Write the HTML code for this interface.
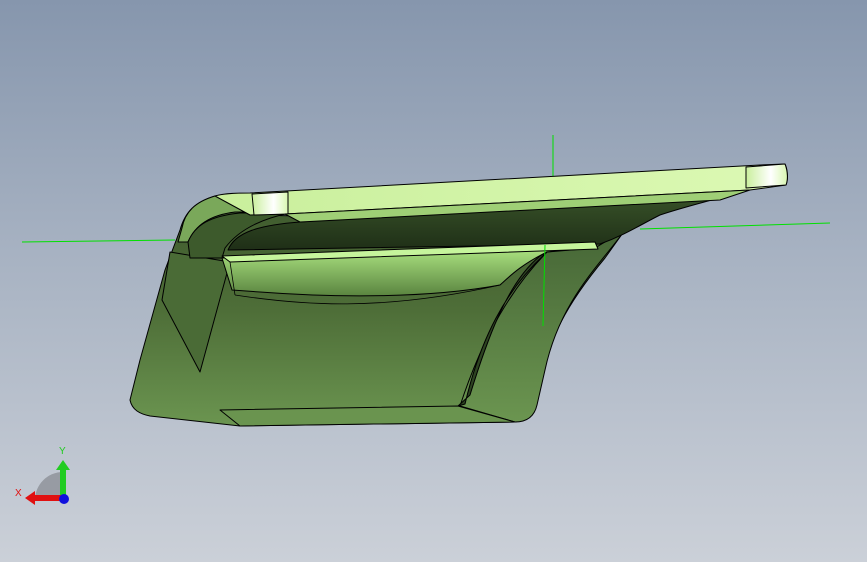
<!DOCTYPE html>
<html><head><meta charset="utf-8"><style>
html,body{margin:0;padding:0;width:867px;height:562px;overflow:hidden}
body{background:linear-gradient(#8696ad 0%,#a7b2c2 45%,#cbd0d8 100%)}
svg{position:absolute;left:0;top:0}
</style></head><body>
<svg width="867" height="562" viewBox="0 0 867 562">
<defs>
<linearGradient id="body" x1="0" y1="0" x2="0" y2="1">
<stop offset="0" stop-color="#3f5a2e"/><stop offset="0.5" stop-color="#4e6e38"/><stop offset="1" stop-color="#6b9550"/></linearGradient>
<linearGradient id="plate" x1="0" y1="0" x2="1" y2="0">
<stop offset="0" stop-color="#c9ef9c"/><stop offset="1" stop-color="#dcf9b4"/></linearGradient>
<linearGradient id="under" x1="0" y1="0" x2="0" y2="1">
<stop offset="0" stop-color="#3a552a"/><stop offset="1" stop-color="#1f2f17"/></linearGradient>
<linearGradient id="strip" x1="0" y1="0" x2="0" y2="1">
<stop offset="0" stop-color="#b0e884"/><stop offset="1" stop-color="#5a8440"/></linearGradient>
<linearGradient id="right" x1="0" y1="0" x2="0" y2="1">
<stop offset="0" stop-color="#466636"/><stop offset="1" stop-color="#6b9550"/></linearGradient>
<linearGradient id="hl" x1="0" y1="0" x2="1" y2="0">
<stop offset="0" stop-color="#c9ef9c"/><stop offset="0.6" stop-color="#ffffff"/><stop offset="1" stop-color="#d8f6b0"/></linearGradient>
</defs>
<g stroke="#00e000" stroke-width="1">
<line x1="22" y1="242" x2="175" y2="240"/>
<line x1="640" y1="229" x2="830" y2="223"/>
<line x1="553" y1="135" x2="553" y2="176"/>
</g>
<g stroke="#000" stroke-width="1" stroke-linejoin="round">
<!-- main body silhouette -->
<path d="M215,196 C195,202 185,212 180,230 L165,270 L140,360 L130,400 C132,410 140,414 150,416 L240,426 L515,422 C530,420 536,412 537,400 C545,340 570,300 605,258 L625,230 L640,222 L250,215 Z" fill="url(#body)"/>
<!-- right side face -->
<path d="M547,252 L595,248 L625,230 C600,265 560,300 545,370 L537,405 C534,418 525,422 515,422 L460,406 C475,360 500,300 547,252 Z" fill="url(#right)"/>
<path d="M540,256 C510,280 490,330 470,395 L458,406 L465,404 C480,340 505,290 547,252 Z" fill="#2d4321"/>
<!-- bottom ledge -->
<path d="M220,410 L458,406 L515,422 L240,426 Z" fill="#6a944f"/>
<!-- left triangle facet -->
<path d="M162,300 L170,252 L230,262 L200,372 Z" fill="#4a6b36"/>
<!-- upper left rim (rounded, light) -->
<path d="M215,196 C195,202 185,212 182,228 L178,242 L188,242 C195,225 210,215 235,212 L255,212 L250,194 Z" fill="#7aa85a"/>
<path d="M188,242 C195,225 210,216 240,213 L290,213 C265,218 240,228 225,248 L222,258 L190,258 Z" fill="#3d5a2c"/>
<!-- underside dark -->
<path d="M228,250 C235,232 260,225 300,222 L745,190 C715,200 690,205 660,215 C640,225 625,235 600,244 Z" fill="url(#under)"/>
<!-- light strip below -->
<path d="M222,258 L595,246 L547,252 C520,265 508,278 500,285 C430,298 340,298 260,292 L232,290 Z" fill="url(#strip)"/>
<!-- slot strip -->
<path d="M222,256 L595,242 L598,249 L230,262 Z" fill="#c6f59c"/>
<!-- plate -->
<path d="M215,196 C225,193 240,193 250,193 L760,165 L785,164 C788,170 788,180 786,185 L750,190 L285,214 L250,215 Z" fill="url(#plate)"/>
<path d="M252,194 L288,192 L288,214 L254,215 Z" fill="url(#hl)"/>
<path d="M746,167 L785,164 C788,172 788,180 786,185 L746,188 Z" fill="url(#hl)"/>
<path d="M285,214 L750,190 L720,200 L300,222 Z" fill="#9fcf76"/>
</g>
<g stroke="#000" stroke-width="0.8" fill="none">
<path d="M235,295 C300,305 380,312 500,285"/>
<line x1="230" y1="262" x2="235" y2="295"/>
</g>
<line x1="545" y1="245" x2="543" y2="326" stroke="#00e000" stroke-width="1"/>
<!-- triad -->
<path d="M35,500 A28,28 0 0 1 63,472 L63,500 Z" fill="#8c9097" opacity="0.8"/>
<rect x="60" y="468" width="6" height="30" fill="#22cc22"/>
<polygon points="56,470 63,460 70,470" fill="#22cc22"/>
<rect x="33" y="495" width="30" height="6" fill="#e01010"/>
<polygon points="35,491 25,498 35,505" fill="#e01010"/>
<circle cx="64" cy="499" r="5" fill="#1010dd"/>
<text x="59" y="454" font-family="Liberation Sans,sans-serif" font-size="10" fill="#22cc22">Y</text>
<text x="15" y="496" font-family="Liberation Sans,sans-serif" font-size="10" fill="#e01010">X</text>
</svg>
</body></html>
